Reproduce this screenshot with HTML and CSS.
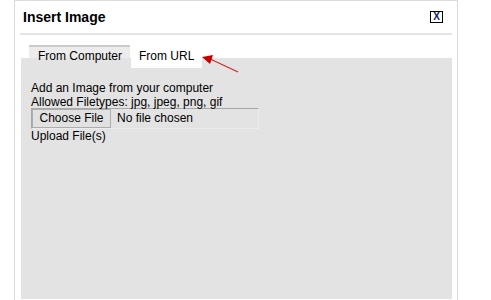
FILE: index.html
```html
<!DOCTYPE html>
<html lang="en">
  <head>
    <meta charset="UTF-8" />
    <meta name="viewport" content="width=device-width, initial-scale=1.0" />
    <title>Insert Image</title>
    <link rel="stylesheet" href="styles.css">
  </head>
  <body>
    <!-- dialog -->
    <div class="dialog">
      <div class="header">
        <span class="title">Insert Image</span>
        <span class="close">X</span>
      </div>

      <!-- tabs -->
      <ul class="tabs">
        <li class="tab">From Computer</li>
        <li class="tab active">From URL</li>
      </ul>

      <div class="panel">
        <p>Add an Image from your computer</p>
        <p>Allowed Filetypes: jpg, jpeg, png, gif</p>
        <div class="file">
          <span class="file-btn">Choose File</span>
          <span class="file-name">No file chosen</span>
        </div>
        <p>Upload File(s)</p>
      </div>
    </div>

    <!-- red arrow pointing at the tab -->
    <svg class="arrow" width="50" height="30" viewBox="0 0 50 30">
      <line x1="8" y1="8" x2="38" y2="22" stroke="#d42a2a" stroke-width="1.3" />
      <polygon points="2,7 13,5 10,14" fill="#c40000" />
    </svg>
  </body>
</html>
```

FILE: styles.css
```css
* {
  margin: 0;
  padding: 0;
}

html,
body {
  height: 100%;
  overflow: hidden;
}

body {
  font-family: "Liberation Sans", Arial, sans-serif;
  font-size: 12px;
  color: #000;
  background-color: #fff;
}

/* dialog box */
.dialog {
  width: 442px;
  height: 299px;
  margin-left: 14px;
  border: 1px solid #dcdcdc;
  border-bottom: none;
  display: flex;
  flex-direction: column;
}

.header {
  height: 32px;
  margin: 0 5px;
  padding: 0 9px 0 3px;
  border-bottom: 2px solid #e4e4e4;
  display: flex;
  align-items: center;
  justify-content: space-between;
}

.title {
  font-size: 14px;
  font-weight: bold;
}

.close {
  width: 11px;
  height: 10px;
  border: 1px solid #000;
  font-size: 10px;
  font-weight: bold;
  line-height: 10px;
  text-align: center;
  color: #10205a;
}

/* tabs */
.tabs {
  list-style: none;
  height: 13px;
  flex: none;
  margin: 10px 5px 0 6px;
  padding-left: 8px;
  display: flex;
  align-items: flex-start;
  gap: 1px;
  position: relative;
  z-index: 1;
}

.tab {
  height: 21px;
  line-height: 19px;
  padding: 0 8px 0 9px;
  border-top: 2px solid #cbcbcb;
  background: linear-gradient(#ececec 11px, #e3e3e3 11px);
}

.tab.active {
  border-top-color: #fff;
  background: #fff;
  padding: 0 8px;
}

/* panel */
.panel {
  flex: 1;
  margin: 0 5px 1px 6px;
  padding: 23px 10px 0;
  background-color: #e3e3e3;
  line-height: 14px;
}

.file {
  width: 226px;
  height: 19px;
  margin-top: -1px;
  border: 1px solid #ececec;
  border-top-color: #a8a8a8;
  border-left-color: #a8a8a8;
  display: flex;
  align-items: stretch;
}

.file-btn {
  width: 77px;
  border: 1px solid #adadad;
  background-color: #e1e1e1;
  text-align: center;
  line-height: 17px;
}

.file-name {
  padding-left: 6px;
  line-height: 19px;
}

.arrow {
  position: absolute;
  left: 200px;
  top: 50px;
}
```
